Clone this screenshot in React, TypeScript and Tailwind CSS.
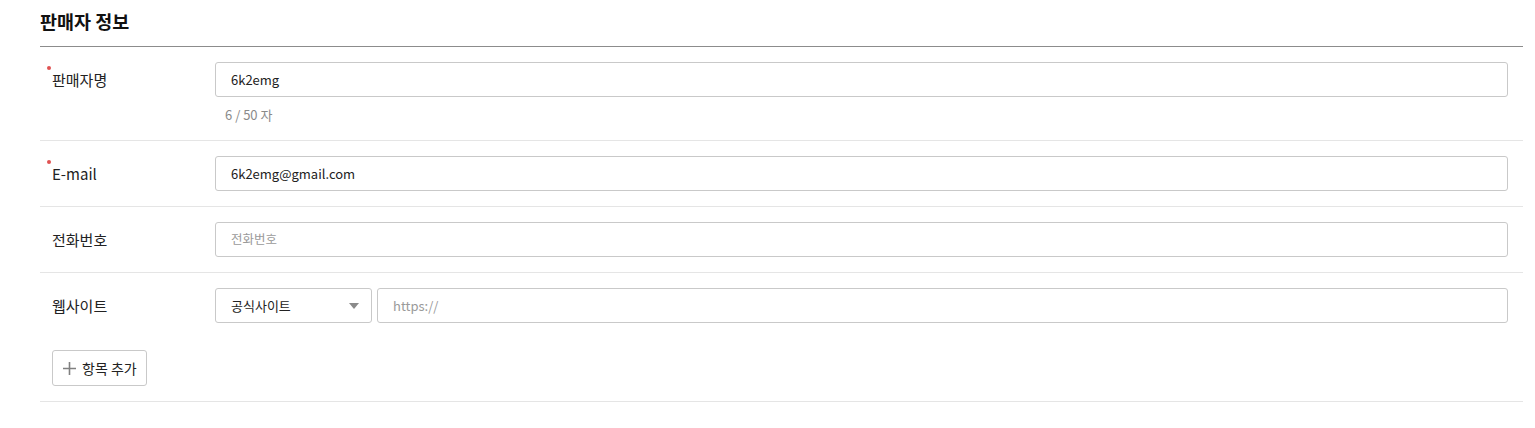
import React from "react";

const font = { fontFamily: '"Noto Sans CJK KR", "Noto Sans", sans-serif' };

function Req() {
  return <span className="absolute -left-[5px] -top-[4px] h-[4px] w-[4px] rounded-full bg-[#e05252]" />;
}

function Label({ text, req }: { text: string; req?: boolean }) {
  return (
    <div className="flex h-[35px] w-[175px] shrink-0 items-center pl-3">
      <span className="relative text-[15px] leading-[20px] text-[#222]">
        {req && <Req />}
        {text}
      </span>
    </div>
  );
}

function Input({ value, placeholder, phSize }: { value?: string; placeholder?: string; phSize?: string }) {
  return (
    <div className="flex h-[35px] w-full items-center rounded-[3px] border border-[#c9c9c9] bg-white px-[15px]">
      {value ? (
        <span className="text-[13px] text-[#222]">{value}</span>
      ) : (
        <span className={`text-[#9a9a9a] ${phSize ?? "text-[12.5px]"}`}>{placeholder}</span>
      )}
    </div>
  );
}

export default function App() {
  return (
    <div className="min-h-[428px] bg-white" style={font}>
      <div className="ml-10 mr-3">
        <div className="flex h-[47px] items-center border-b border-[#8c8c8c] pb-[3px]">
          <h2 className="text-[18.5px] font-bold text-[#111]">판매자 정보</h2>
        </div>

        <div className="flex border-b border-[#e5e5e5] pr-[15px] pt-[15px] pb-[16px]">
          <Label text="판매자명" req />
          <div className="flex-1">
            <Input value="6k2emg" />
            <div className="mt-[9px] pl-[10px] text-[13px] leading-[18px] text-[#8a8a8a]">6 / 50 자</div>
          </div>
        </div>

        <div className="flex border-b border-[#e5e5e5] py-[15px] pr-[15px]">
          <Label text="E-mail" req />
          <div className="flex-1">
            <Input value="6k2emg@gmail.com" />
          </div>
        </div>

        <div className="flex border-b border-[#e5e5e5] py-[15px] pr-[15px]">
          <Label text="전화번호" />
          <div className="flex-1">
            <Input placeholder="전화번호" />
          </div>
        </div>

        <div className="border-b border-[#e5e5e5] py-[15px] pr-[15px]">
          <div className="flex">
            <Label text="웹사이트" />
            <div className="flex flex-1 gap-[5px]">
              <div className="flex h-[35px] w-[157px] shrink-0 items-center justify-between rounded-[3px] border border-[#c9c9c9] bg-white pl-[15px] pr-[12px]">
                <span className="text-[13px] text-[#222]">공식사이트</span>
                <svg width="10" height="6" viewBox="0 0 10 6">
                  <path d="M0 0 H10 L5 6 Z" fill="#8a8a8a" />
                </svg>
              </div>
              <div className="flex-1">
                <Input placeholder="https://" phSize="text-[13px]" />
              </div>
            </div>
          </div>
          <div className="mt-[27px] pl-3">
            <button className="flex h-[36px] items-center gap-[6px] rounded-[3px] border border-[#c9c9c9] bg-white pl-[10px] pr-[9px]">
              <svg width="13" height="13" viewBox="0 0 13 13">
                <path d="M6.5 0 V13 M0 6.5 H13" stroke="#808080" strokeWidth="1.6" />
              </svg>
              <span className="text-[14px] text-[#222]">항목 추가</span>
            </button>
          </div>
        </div>
      </div>
    </div>
  );
}
